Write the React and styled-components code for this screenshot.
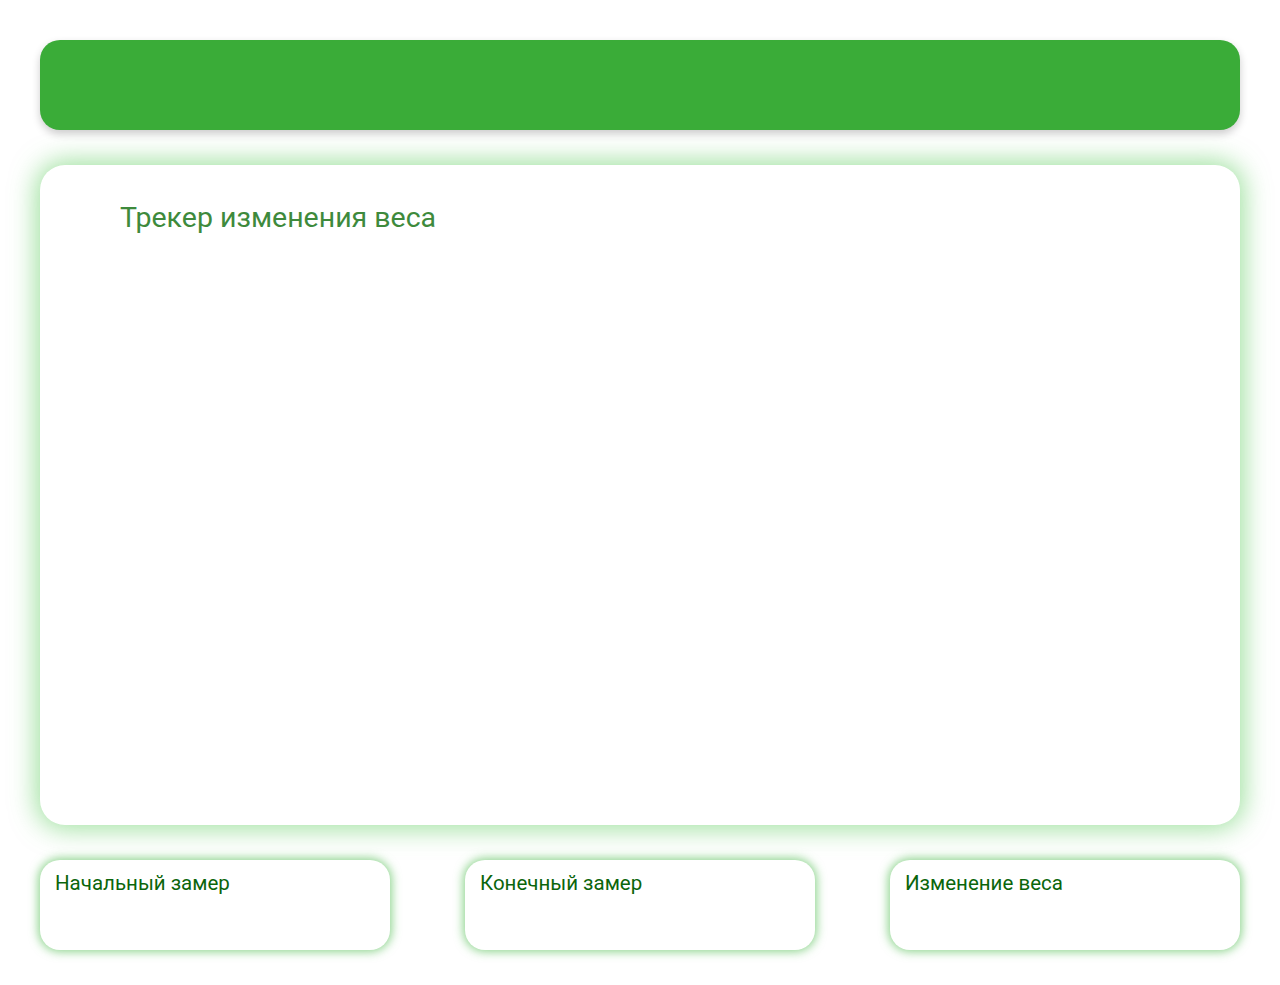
import React from "react";
import styled, { createGlobalStyle } from "styled-components";

const GlobalStyle = createGlobalStyle`
  * {
    box-sizing: border-box;
  }
  body {
    margin: 0;
    background: #ffffff;
    font-family: Roboto, "Noto Sans", sans-serif;
  }
`;

const Page = styled.main`
  display: flex;
  flex-direction: column;
  gap: 35px;
  padding: 40px;
`;

const Header = styled.header`
  height: 90px;
  border-radius: 20px;
  background-color: #3aac38;
  box-shadow: 0 4px 8px rgba(0, 0, 0, 0.2);
`;

const TrackerCard = styled.section`
  height: 660px;
  border-radius: 25px;
  background: #ffffff;
  padding: 36px 80px;
  box-shadow: 0 0 26px 4px rgba(80, 200, 80, 0.55);

  h2 {
    margin: 0;
    font-size: 28.5px;
    font-weight: 400;
    color: #3e8a3c;
  }
`;

const StatsRow = styled.div`
  display: flex;
  justify-content: space-between;
`;

const StatCard = styled.div`
  width: 350px;
  height: 90px;
  border-radius: 20px;
  background: #ffffff;
  padding: 11px 15px;
  box-shadow: 0 0 10px 2px rgba(70, 185, 70, 0.6);
  color: #0b650b;
  font-size: 20.5px;
`;

const stats = ["Начальный замер", "Конечный замер", "Изменение веса"];

const App = () => {
  return (
    <>
      <GlobalStyle />
      <Page>
        <Header />
        <TrackerCard>
          <h2>Трекер изменения веса</h2>
        </TrackerCard>
        <StatsRow>
          {stats.map((s) => (
            <StatCard key={s}>{s}</StatCard>
          ))}
        </StatsRow>
      </Page>
    </>
  );
};

export default App;
